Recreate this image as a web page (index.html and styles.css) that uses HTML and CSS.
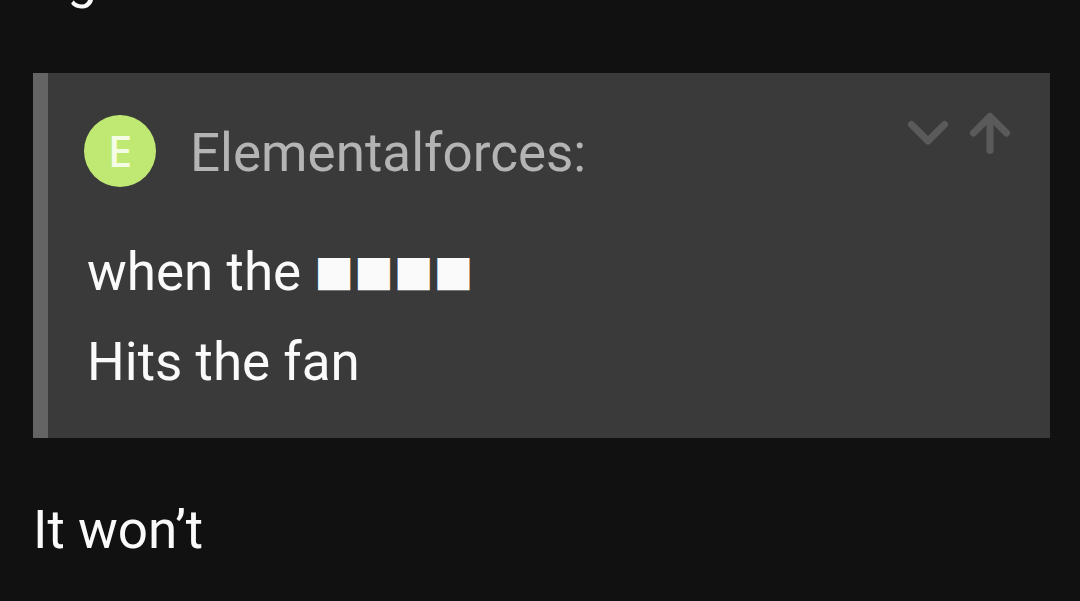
FILE: index.html
```html
<!DOCTYPE html>
<html lang="en">
<head>
    <meta charset="UTF-8">
    <meta name="viewport" content="width=device-width, initial-scale=1.0">
    <title>Topic</title>
    <link rel="stylesheet" href="styles.css">
</head>
<body>
    <main class="post">
        <p class="text">Ugh</p>

        <aside class="quote">
            <div class="quote-title">
                <span class="avatar">E</span>
                <span class="username">Elementalforces:</span>
                <div class="quote-controls">
                    <button type="button" class="control" aria-label="Expand quote">
                        <svg width="42" height="44" viewBox="0 0 42 44">
                            <path d="M4.500 12.500L21 29L37.500 12.500"/>
                        </svg>
                    </button>
                    <button type="button" class="control" aria-label="Go to quoted post">
                        <svg width="42" height="44" viewBox="0 0 42 44">
                            <path d="M4.500 21L21 4.500L37.500 21"/>
                            <path d="M21 6V38.500"/>
                        </svg>
                    </button>
                </div>
            </div>
            <blockquote class="quote-body">
                when the <span class="censored">■■■■</span><br>
                Hits the fan
            </blockquote>
        </aside>

        <p class="text">It won’t</p>
    </main>
</body>
</html>
```

FILE: styles.css
```css
body {
    margin: 0;
    background-color: #111111;
    color: #fafafa;
    font-family: Roboto, sans-serif;
    font-size: 53px;
    overflow: hidden;
}
.post {
    margin: -59px 30px 0 33px;
}
.text {
    margin: 0;
    line-height: 76px;
}
.quote {
    margin: 56px 0 54px;
    padding: 39px 36px 31px;
    border-left: 15px solid #646464;
    background-color: #3a3a3a;
}
.quote-title {
    display: flex;
    align-items: center;
    color: #b4b4b4;
    line-height: 74px;
}
.username {
    padding-top: 4px;
}
.avatar {
    width: 72px;
    height: 72px;
    margin-right: 34px;
    border-radius: 50%;
    background-color: #c0e974;
    color: #f5fce6;
    font-family: "Noto Sans", sans-serif;
    font-size: 44px;
    font-weight: 500;
    line-height: 70px;
    text-align: center;
}
.quote-controls {
    display: flex;
    gap: 20px;
    align-self: flex-start;
    margin-left: auto;
    margin-right: 3px;
}
.control {
    display: block;
    padding: 0;
    border: none;
    background: none;
    color: #5a5a5a;
    cursor: pointer;
}
.control svg {
    display: block;
    fill: none;
    stroke: currentColor;
    stroke-width: 7;
    stroke-linecap: round;
    stroke-linejoin: round;
}
.quote-body {
    margin: 37px 0 0 3px;
    line-height: 90px;
}
.censored {
    font-family: "DejaVu Sans", sans-serif;
    font-size: 42px;
    line-height: 1;
    vertical-align: 5px;
}
```
